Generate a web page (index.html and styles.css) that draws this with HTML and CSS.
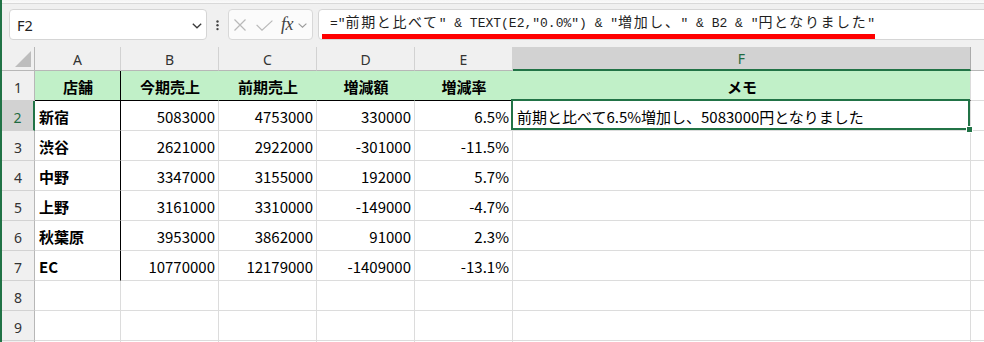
FILE: index.html
```html
<!DOCTYPE html>
<html lang="ja">
<head>
<meta charset="utf-8">
<link rel="stylesheet" href="styles.css">
</head>
<body>
<div class="app">
  <div class="ribbon-edge"></div>
  <div class="fbar">
    <div class="namebox">
      <span class="nb-text">F2</span>
      <svg class="chev" width="10" height="6" viewBox="0 0 10 6"><polyline points="0.8,0.8 5,4.8 9.2,0.8" fill="none" stroke="#3a3a3a" stroke-width="1.3"/></svg>
    </div>
    <svg class="dots" width="3" height="11" viewBox="0 0 3 11"><circle cx="1.5" cy="1.5" r="1.2" fill="#444"/><circle cx="1.5" cy="5.3" r="1.2" fill="#444"/><circle cx="1.5" cy="9.1" r="1.2" fill="#444"/></svg>
    <div class="fbtns">
      <svg class="ic-x" width="12" height="12" viewBox="0 0 12 12"><path d="M0.5 0.5 L11.5 11.5 M11.5 0.5 L0.5 11.5" stroke="#b9b9b9" stroke-width="1.2" fill="none"/></svg>
      <svg class="ic-ok" width="17" height="11" viewBox="0 0 17 11"><polyline points="0.6,4.8 6,10.2 16.4,0.6" fill="none" stroke="#b9b9b9" stroke-width="1.2"/></svg>
      <span class="fx">fx</span>
      <svg class="chev2" width="9" height="5" viewBox="0 0 9 5"><polyline points="0.6,0.6 4.5,4.2 8.4,0.6" fill="none" stroke="#9a9a9a" stroke-width="1.1"/></svg>
    </div>
    <div class="formula">
      <span class="ftext">="<span class="j">前期と比べて</span>" &amp; TEXT(E2,"0.0%") &amp; "<span class="j">増加し、</span>" &amp; B2 &amp; "<span class="j">円となりました</span>"</span>
    </div>
  </div>
  <div class="sheet">
    <div class="ch corner"><span class="tri"></span></div>
    <div class="ch">A</div>
    <div class="ch">B</div>
    <div class="ch">C</div>
    <div class="ch">D</div>
    <div class="ch">E</div>
    <div class="ch ch-sel">F</div>
    <div class="ch ch-rest"></div>

    <div class="rh">1</div>
    <div class="c hd hd-a">店舗</div>
    <div class="c hd">今期売上</div>
    <div class="c hd">前期売上</div>
    <div class="c hd">増減額</div>
    <div class="c hd">増減率</div>
    <div class="c hd hd-f">メモ</div>
    <div class="c rest"></div>

    <div class="rh rh-sel">2</div>
    <div class="c ca">新宿</div>
    <div class="c num">5083000</div>
    <div class="c num">4753000</div>
    <div class="c num">330000</div>
    <div class="c num">6.5%</div>
    <div class="c memo sel">前期と比べて6.5%増加し、5083000円となりました</div>
    <div class="c rest"></div>

    <div class="rh">3</div>
    <div class="c ca">渋谷</div>
    <div class="c num">2621000</div>
    <div class="c num">2922000</div>
    <div class="c num">-301000</div>
    <div class="c num">-11.5%</div>
    <div class="c"></div>
    <div class="c rest"></div>

    <div class="rh">4</div>
    <div class="c ca">中野</div>
    <div class="c num">3347000</div>
    <div class="c num">3155000</div>
    <div class="c num">192000</div>
    <div class="c num">5.7%</div>
    <div class="c"></div>
    <div class="c rest"></div>

    <div class="rh">5</div>
    <div class="c ca">上野</div>
    <div class="c num">3161000</div>
    <div class="c num">3310000</div>
    <div class="c num">-149000</div>
    <div class="c num">-4.7%</div>
    <div class="c"></div>
    <div class="c rest"></div>

    <div class="rh">6</div>
    <div class="c ca">秋葉原</div>
    <div class="c num">3953000</div>
    <div class="c num">3862000</div>
    <div class="c num">91000</div>
    <div class="c num">2.3%</div>
    <div class="c"></div>
    <div class="c rest"></div>

    <div class="rh">7</div>
    <div class="c ca">EC</div>
    <div class="c num">10770000</div>
    <div class="c num">12179000</div>
    <div class="c num">-1409000</div>
    <div class="c num">-13.1%</div>
    <div class="c"></div>
    <div class="c rest"></div>

    <div class="rh">8</div>
    <div class="c"></div>
    <div class="c"></div>
    <div class="c"></div>
    <div class="c"></div>
    <div class="c"></div>
    <div class="c"></div>
    <div class="c rest"></div>

    <div class="rh">9</div>
    <div class="c"></div>
    <div class="c"></div>
    <div class="c"></div>
    <div class="c"></div>
    <div class="c"></div>
    <div class="c"></div>
    <div class="c rest"></div>

    <div class="rh"></div>
    <div class="c"></div>
    <div class="c"></div>
    <div class="c"></div>
    <div class="c"></div>
    <div class="c"></div>
    <div class="c"></div>
    <div class="c rest"></div>
  </div>
</div>
</body>
</html>
```

FILE: styles.css
```css
html, body {
  margin: 0;
  padding: 0;
  background: #f0f0f0;
}

.app {
  width: 984px;
  height: 342px;
  overflow: hidden;
  box-sizing: border-box;
  border-left: 2px solid #217346;
  background: #f0f0f0;
  font-family: "Noto Sans CJK JP", sans-serif;
}

.ribbon-edge {
  height: 4px;
  box-sizing: border-box;
  background: linear-gradient(#f4f4f4, #fbfbfb);
  border-bottom: 1px solid #d9d9d9;
}

.fbar {
  display: flex;
  align-items: flex-start;
  height: 43px;
  box-sizing: border-box;
  padding: 5px 0 0 7px;
}

.namebox {
  width: 198px;
  height: 31px;
  box-sizing: border-box;
  border: 1px solid #d5d5d5;
  border-radius: 4px;
  background: #fff;
  display: flex;
  align-items: center;
  justify-content: space-between;
  padding: 0 4px 0 7px;
}

.nb-text {
  font-family: "Noto Sans", "Liberation Sans", sans-serif;
  font-size: 14.5px;
  color: #222;
  line-height: 1;
  padding-top: 1px;
}

.chev {
  margin-top: 2px;
}

.dots {
  margin: 11px 0 0 9px;
}

.fbtns {
  margin-left: 9px;
  width: 85px;
  height: 31px;
  box-sizing: border-box;
  border: 1px solid #d8d8d8;
  border-radius: 4px;
  background: #fbfbfb;
  display: flex;
  align-items: center;
  padding-left: 5px;
}

.ic-x {
  margin-top: 0;
}

.ic-ok {
  margin-left: 10px;
  margin-top: 1px;
}

.fx {
  margin-left: 8px;
  font-family: "Liberation Serif", "DejaVu Serif", serif;
  font-style: italic;
  font-size: 18px;
  color: #444;
  line-height: 1;
  letter-spacing: -0.5px;
  margin-top: -1px;
}

.chev2 {
  margin-left: 5px;
  margin-top: 1px;
}

.formula {
  margin-left: 5px;
  margin-right: -20px;
  flex: 1;
  height: 31px;
  box-sizing: border-box;
  border: 1px solid #d5d5d5;
  border-radius: 4px;
  background: #fff;
  display: flex;
  align-items: flex-end;
  padding-left: 3px;
}

.ftext {
  white-space: pre;
  font-family: "Liberation Mono", monospace;
  font-size: 13px;
  line-height: 17px;
  color: #1e1e1e;
  padding: 0 0 2px 8px;
  border-bottom: 5px solid #ff0000;
}

.ftext .j {
  font-family: "Noto Sans CJK JP", sans-serif;
  font-size: 14px;
  letter-spacing: 1.6px;
}

/* ---------- sheet ---------- */

.sheet {
  display: grid;
  grid-template-columns: 33px 86px 98px 98px 98px 98px 458px 1fr;
  grid-template-rows: 24px repeat(10, 30px);
  background: #fff;
}

.ch {
  background: #f0f0f0;
  border-right: 1px solid #d2d2d2;
  border-bottom: 1px solid #b7b7b7;
  box-sizing: border-box;
  display: flex;
  align-items: center;
  justify-content: center;
  font-family: "Noto Sans", "Liberation Sans", sans-serif;
  font-size: 14px;
  color: #333;
  padding-top: 1px;
}

.corner {
  position: relative;
  border-right-color: #b7b7b7;
}

.tri {
  position: absolute;
  right: 3px;
  bottom: 3px;
  width: 0;
  height: 0;
  border-style: solid;
  border-width: 0 0 16px 16px;
  border-color: transparent transparent #bdbdbd transparent;
}

.ch-sel {
  background: #d2d2d2;
  color: #1f6b41;
  border-right-color: #ababab;
  border-bottom: 2px solid #217346;
}

.ch-rest {
  border-right: none;
}

.rh {
  background: #f0f0f0;
  border-right: 1px solid #b7b7b7;
  border-bottom: 1px solid #d2d2d2;
  box-sizing: border-box;
  display: flex;
  align-items: center;
  justify-content: center;
  font-family: "Noto Sans", "Liberation Sans", sans-serif;
  font-size: 14px;
  color: #333;
  padding-top: 3px;
}

.rh-sel {
  background: #d2d2d2;
  color: #1f6b41;
  border-right: 2px solid #217346;
}

.c {
  box-sizing: border-box;
  border-right: 1px solid #dcdcdc;
  border-bottom: 1px solid #dcdcdc;
  display: flex;
  align-items: center;
  padding: 2px 3px 0 4px;
  font-size: 15px;
  color: #000;
  white-space: nowrap;
  overflow: visible;
}

.rest {
  border-right: none;
}

.hd {
  background: #c1f0c8;
  border-right-color: #c1f0c8;
  border-bottom: 1px solid #000;
  font-weight: bold;
  justify-content: center;
}

.hd-a {
  border-right-color: #000;
}

.hd-f {
  border-right-color: #dcdcdc;
}

.ca {
  font-weight: bold;
}

.sheet > .ca,
.sheet > .hd-a {
  border-right: 1px solid #000;
}

.num {
  justify-content: flex-end;
}

.memo {
  justify-content: flex-start;
}

.sel {
  position: relative;
}

.sel::after {
  content: "";
  position: absolute;
  left: -2px;
  top: -2px;
  right: 0;
  bottom: 0;
  border: 2px solid #217346;
  pointer-events: none;
}

.sel::before {
  content: "";
  position: absolute;
  right: -3px;
  bottom: -3px;
  width: 5px;
  height: 5px;
  background: #217346;
  border: 1px solid #fff;
  z-index: 2;
}
```
